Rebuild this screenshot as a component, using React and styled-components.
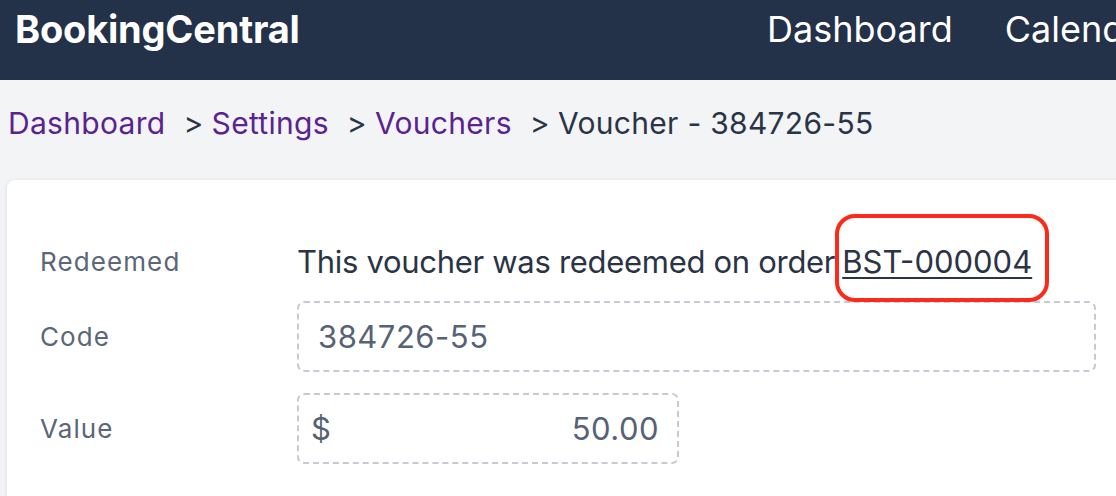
import React from 'react';
import styled, { createGlobalStyle } from 'styled-components';

const GlobalStyle = createGlobalStyle`
  html, body {
    margin: 0;
    padding: 0;
    background: #f3f4f6;
    overflow: hidden;
  }
  body {
    font-family: Inter, "Noto Sans", sans-serif;
    -webkit-font-smoothing: antialiased;
  }
`;

const Page = styled.div`
  width: 1116px;
  height: 496px;
  overflow: hidden;
`;

const TopBar = styled.header`
  height: 80px;
  box-sizing: border-box;
  background: #233149;
  display: flex;
  align-items: flex-start;
  padding: 10px 0 0 15px;
  white-space: nowrap;
  overflow: hidden;
`;

const Brand = styled.div`
  flex: 0 0 752px;
  font-size: 38px;
  line-height: 1;
  font-weight: 700;
  color: #fff;
  letter-spacing: -0.2px;
`;

const Nav = styled.nav`
  display: flex;
  gap: 52px;
`;

const NavLink = styled.a`
  font-size: 36px;
  line-height: 1;
  color: #fff;
  text-decoration: none;
  margin-top: 1px;
`;

const Crumbs = styled.div`
  padding: 0 0 0 8px;
  height: 98px;
  display: flex;
  align-items: center;
  font-size: 30px;
  letter-spacing: 0.3px;
  color: #2a3446;
  white-space: nowrap;
  margin-top: -6px;
`;

const Crumb = styled.a`
  color: #5a2390;
  text-decoration: none;
`;

const Sep = styled.span`
  margin: 0 8px 0 18px;
`;

const Card = styled.section`
  margin: 8px 0 0 7px;
  width: 1160px;
  height: 400px;
  background: #fff;
  border-radius: 8px;
  box-shadow: 0 1px 4px rgba(0, 0, 0, 0.12);
  padding: 62px 0 0 33px;
  box-sizing: border-box;
  display: flex;
  flex-direction: column;
  gap: 21px;
`;

const Row = styled.div`
  display: grid;
  grid-template-columns: 257px 1fr;
  align-items: center;
  min-height: ${p => (p.$tight ? '38px' : '71px')};
`;

const Label = styled.div`
  font-size: 26px;
  letter-spacing: 1.1px;
  color: #5b6678;
`;

const Note = styled.div`
  font-size: 31px;
  letter-spacing: -0.3px;
  color: #2a3446;
  white-space: nowrap;
  display: flex;
  align-items: center;
`;

const OrderLink = styled.a`
  position: relative;
  color: #2a3446;
  letter-spacing: 0;
  text-decoration: underline;
  text-decoration-thickness: 2px;
  text-underline-offset: 4px;
  margin-left: 7px;
`;

const Highlight = styled.span`
  position: absolute;
  left: -7px;
  right: -17px;
  top: -29px;
  bottom: -22px;
  border: 4px solid #fb2b1c;
  border-radius: 20px;
  pointer-events: none;
`;

const Field = styled.div`
  width: ${p => p.$width}px;
  height: 71px;
  box-sizing: border-box;
  border: 2px dashed #c6cad2;
  border-radius: 7px;
  display: flex;
  align-items: center;
  justify-content: space-between;
  padding: 0 18px 0 ${p => p.$padLeft}px;
  font-size: 31px;
  letter-spacing: 0.5px;
  color: #566275;
`;

export default function App() {
  return (
    <Page>
      <GlobalStyle />
      <TopBar>
        <Brand>BookingCentral</Brand>
        <Nav>
          <NavLink>Dashboard</NavLink>
          <NavLink>Calendar</NavLink>
        </Nav>
      </TopBar>
      <Crumbs>
        <Crumb>Dashboard</Crumb>
        <Sep>&gt;</Sep>
        <Crumb>Settings</Crumb>
        <Sep>&gt;</Sep>
        <Crumb>Vouchers</Crumb>
        <Sep>&gt;</Sep>
        <span>Voucher - 384726-55</span>
      </Crumbs>
      <Card>
        <Row $tight>
          <Label>Redeemed</Label>
          <Note>
            This voucher was redeemed on order
            <OrderLink>
              BST-000004
              <Highlight />
            </OrderLink>
          </Note>
        </Row>
        <Row>
          <Label>Code</Label>
          <Field $width={799} $padLeft={19}>
            <span>384726-55</span>
          </Field>
        </Row>
        <Row>
          <Label>Value</Label>
          <Field $width={382} $padLeft={12}>
            <span>$</span>
            <span>50.00</span>
          </Field>
        </Row>
      </Card>
    </Page>
  );
}
